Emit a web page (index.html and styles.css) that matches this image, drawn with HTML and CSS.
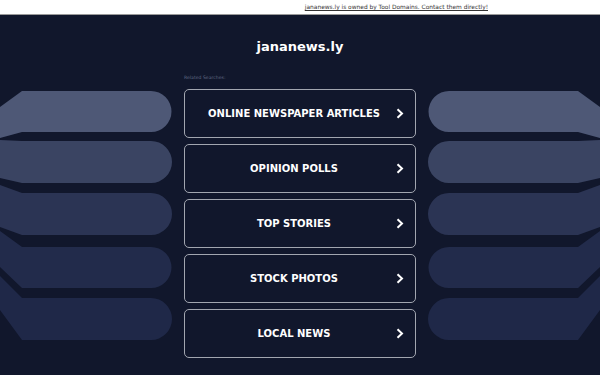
FILE: index.html
```html
<!DOCTYPE html>
<html>
<head>
<meta charset="utf-8">
<link rel="stylesheet" href="styles.css">
</head>
<body>
<div class="topbar"><a class="owner" href="#">jananews.ly is owned by Tool Domains. Contact them directly!</a></div>
<svg class="bg" viewBox="0 0 600 375" width="600" height="375" aria-hidden="true">
  <g id="fan">
    <path fill="#4e5876" d="M0,107 L22,91 L151,91 A20.5,20.5 0 0 1 151,132 L22,132 L0,138 Z"/>
    <path fill="#3a4462" d="M0,140 L22,141 L151,141 A21,21 0 0 1 151,183 L22,183 L0,178 Z"/>
    <path fill="#2b3454" d="M0,185 L22,193 L151,193 A21,21 0 0 1 151,235 L22,235 L0,227 Z"/>
    <path fill="#222b4b" d="M0,231 L22,247 L151,247 A20.5,20.5 0 0 1 151,288 L22,288 L0,267 Z"/>
    <path fill="#1f2848" d="M0,276 L22,298 L151,298 A21,21 0 0 1 151,340 L22,340 L0,310 Z"/>
  </g>
  <use href="#fan" transform="translate(600,0) scale(-1,1)"/>
</svg>
<main class="content">
  <h1 class="title">jananews.ly</h1>
  <div class="panel">
    <div class="related">Related Searches:</div>
    <ul class="links">
      <li><a class="btn" href="#"><span class="label">ONLINE NEWSPAPER ARTICLES</span><svg class="chev" viewBox="0 0 8 11" width="8" height="11"><path d="M1.5,1.2 L6,5.5 L1.5,9.8" fill="none" stroke="#fff" stroke-width="2"/></svg></a></li>
      <li><a class="btn" href="#"><span class="label">OPINION POLLS</span><svg class="chev" viewBox="0 0 8 11" width="8" height="11"><path d="M1.5,1.2 L6,5.5 L1.5,9.8" fill="none" stroke="#fff" stroke-width="2"/></svg></a></li>
      <li><a class="btn" href="#"><span class="label">TOP STORIES</span><svg class="chev" viewBox="0 0 8 11" width="8" height="11"><path d="M1.5,1.2 L6,5.5 L1.5,9.8" fill="none" stroke="#fff" stroke-width="2"/></svg></a></li>
      <li><a class="btn" href="#"><span class="label">STOCK PHOTOS</span><svg class="chev" viewBox="0 0 8 11" width="8" height="11"><path d="M1.5,1.2 L6,5.5 L1.5,9.8" fill="none" stroke="#fff" stroke-width="2"/></svg></a></li>
      <li><a class="btn" href="#"><span class="label">LOCAL NEWS</span><svg class="chev" viewBox="0 0 8 11" width="8" height="11"><path d="M1.5,1.2 L6,5.5 L1.5,9.8" fill="none" stroke="#fff" stroke-width="2"/></svg></a></li>
    </ul>
  </div>
</main>
</body>
</html>
```
FILE: styles.css
```css
* { box-sizing: border-box; }
html, body { margin: 0; padding: 0; }
body {
  width: 600px;
  height: 375px;
  overflow: hidden;
  background: #11172c;
  font-family: "DejaVu Sans", sans-serif;
  position: relative;
}
.topbar {
  position: relative;
  z-index: 2;
  height: 15px;
  background: #fff;
  border-bottom: 1px solid #9a9a9a;
  display: flex;
  justify-content: flex-end;
  align-items: center;
  padding-right: 112px;
}
.owner {
  font-size: 5.9px;
  color: #333;
  text-decoration: underline;
}
.bg {
  position: absolute;
  left: 0;
  top: 0;
  z-index: 0;
}
.content {
  position: relative;
  z-index: 1;
  display: flex;
  flex-direction: column;
  align-items: center;
}
.title {
  margin: 24px 0 0;
  font-size: 13px;
  line-height: 16px;
  font-weight: bold;
  color: #fff;
}
.panel {
  width: 232px;
  margin-top: 20px;
}
.related {
  font-size: 4.6px;
  line-height: 6px;
  color: #5f6883;
  margin-bottom: 8px;
}
.links {
  list-style: none;
  margin: 0;
  padding: 0;
  display: flex;
  flex-direction: column;
  gap: 6px;
}
.btn {
  display: flex;
  align-items: center;
  height: 49px;
  border: 1.5px solid #a2a6b0;
  border-radius: 5px;
  text-decoration: none;
  color: #fff;
  padding-right: 11px;
}
.label {
  flex: 1;
  text-align: center;
  padding-left: 7px;
  font-size: 10px;
  font-weight: bold;
}
.chev { display: block; }
```
